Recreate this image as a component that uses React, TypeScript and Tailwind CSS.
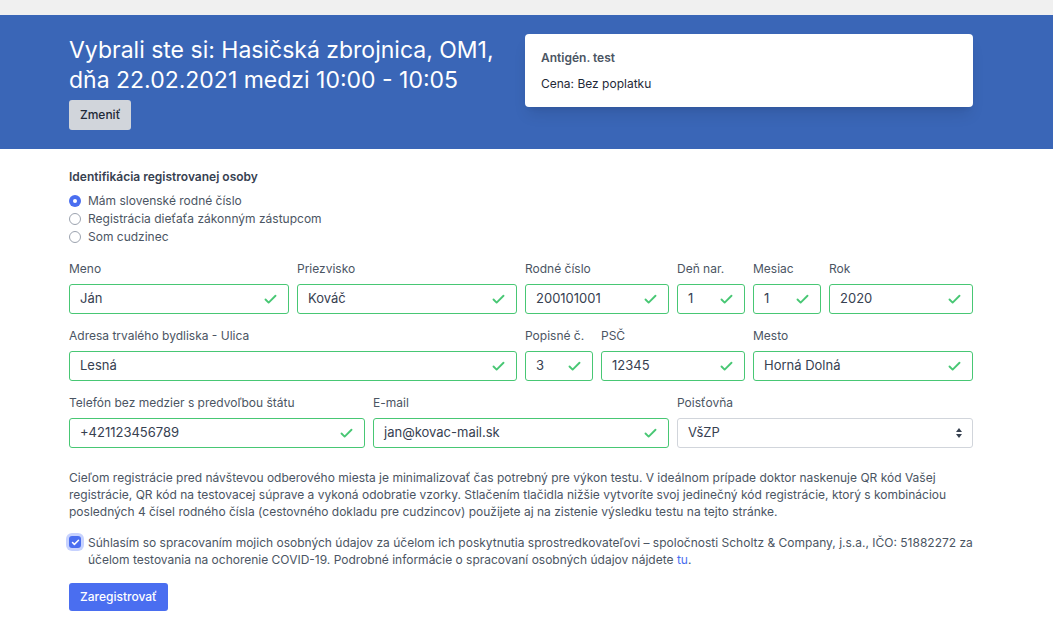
import { Check } from 'lucide-react';

const font = { fontFamily: 'Inter, "Noto Sans", sans-serif' };

type Field = { label: string; value: string; span: string };

const FIELDS: Field[] = [
  { label: 'Meno', value: 'Ján', span: 'col-span-3' },
  { label: 'Priezvisko', value: 'Kováč', span: 'col-span-3' },
  { label: 'Rodné číslo', value: '200101001', span: 'col-span-2' },
  { label: 'Deň nar.', value: '1', span: 'col-span-1' },
  { label: 'Mesiac', value: '1', span: 'col-span-1' },
  { label: 'Rok', value: '2020', span: 'col-span-2' },
  { label: 'Adresa trvalého bydliska - Ulica', value: 'Lesná', span: 'col-span-6' },
  { label: 'Popisné č.', value: '3', span: 'col-span-1' },
  { label: 'PSČ', value: '12345', span: 'col-span-2' },
  { label: 'Mesto', value: 'Horná Dolná', span: 'col-span-3' },
  { label: 'Telefón bez medzier s predvoľbou štátu', value: '+421123456789', span: 'col-span-4' },
  { label: 'E-mail', value: 'jan@kovac-mail.sk', span: 'col-span-4' },
];

function Input({ f }: { f: Field }) {
  return (
    <div className={f.span}>
      <label className="block text-[12px] leading-4 text-[#4b5563] mb-[7px] whitespace-nowrap">{f.label}</label>
      <div className="h-[30px] border border-[#48c774] rounded-[3px] flex items-center justify-between px-[10px] bg-white">
        <span className="text-[13px] text-[#374151]">{f.value}</span>
        <Check size={15} strokeWidth={3} className="text-[#48c774] shrink-0" />
      </div>
    </div>
  );
}

function Radio({ checked, label }: { checked?: boolean; label: string }) {
  return (
    <div className="flex items-center gap-[7px] h-[18px]">
      {checked ? (
        <span className="w-[12px] h-[12px] rounded-full bg-[#4a6ef0] flex items-center justify-center">
          <span className="w-[4px] h-[4px] rounded-full bg-white" />
        </span>
      ) : (
        <span className="w-[12px] h-[12px] rounded-full border border-[#9ca3af] bg-white" />
      )}
      <span className="text-[12px] text-[#4b5563]">{label}</span>
    </div>
  );
}

export default function App() {
  return (
    <div className="min-h-screen bg-white" style={font}>
      <div className="h-[15px] bg-[#f0f0f0]" />
      <header className="bg-[#3a66b7] h-[134px] pl-[69px] pr-[80px] flex">
        <div className="pt-[20px]">
          <h1 className="text-white text-[23px] leading-[30px] whitespace-nowrap">
            Vybrali ste si: Hasičská zbrojnica, OM1,
            <br />
            dňa 22.02.2021 medzi 10:00 - 10:05
          </h1>
          <button className="mt-[5px] h-[30px] px-[11px] bg-[#d1d5db] rounded-[3px] text-[12px] font-medium text-[#1f2937]">
            Zmeniť
          </button>
        </div>
        <div className="mt-[19px] w-[448px] h-[73px] bg-white rounded-[4px] shadow-lg px-[16px] pt-[15px] ml-auto">
          <div className="text-[12px] font-semibold text-[#4b5563]">Antigén. test</div>
          <div className="text-[12px] text-[#1f2937] mt-[8px]">Cena: Bez poplatku</div>
        </div>
      </header>

      <main className="pl-[69px] w-[973px] pt-[19px]">
        <div className="text-[12px] font-semibold text-[#374151] mb-[6px]">Identifikácia registrovanej osoby</div>
        <div className="flex flex-col">
          <Radio checked label="Mám slovenské rodné číslo" />
          <Radio label="Registrácia dieťaťa zákonným zástupcom" />
          <Radio label="Som cudzinec" />
        </div>

        <div className="grid grid-cols-12 gap-x-[8px] gap-y-[14px] mt-[15px]">
          {FIELDS.map((f, i) => (
            <Input key={i} f={f} />
          ))}
          <div className="col-span-4">
            <label className="block text-[12px] leading-4 text-[#4b5563] mb-[7px]">Poisťovňa</label>
            <div className="h-[30px] border border-[#d1d5db] rounded-[3px] flex items-center justify-between px-[10px] bg-white">
              <span className="text-[13px] text-[#374151]">VšZP</span>
              <svg width="6" height="10" viewBox="0 0 6 10" className="text-[#374151]">
                <path d="M3 0L6 4H0z M3 10L0 6h6z" fill="currentColor" />
              </svg>
            </div>
          </div>
        </div>

        <p className="mt-[21px] text-[12px] leading-[17px] text-[#4b5563]">
          Cieľom registrácie pred návštevou odberového miesta je minimalizovať čas potrebný pre výkon testu. V ideálnom prípade doktor naskenuje QR kód Vašej registrácie, QR kód na testovacej súprave a vykoná odobratie vzorky. Stlačením tlačidla nižšie vytvoríte svoj jedinečný kód registrácie, ktorý s kombináciou posledných 4 čísel rodného čísla (cestovného dokladu pre cudzincov) použijete aj na zistenie výsledku testu na tejto stránke.
        </p>

        <div className="mt-[14px] flex items-start gap-[7px]">
          <span className="mt-[2px] w-[12px] h-[12px] shrink-0 rounded-[3px] bg-[#4a6ef0] flex items-center justify-center ring-[3px] ring-[#c7d2fe]">
            <Check size={9} strokeWidth={4} className="text-white" />
          </span>
          <p className="text-[12px] leading-[17px] text-[#4b5563]">
            Súhlasím so spracovaním mojich osobných údajov za účelom ich poskytnutia sprostredkovateľovi – spoločnosti Scholtz &amp; Company, j.s.a., IČO: 51882272 za účelom testovania na ochorenie COVID-19. Podrobné informácie o spracovaní osobných údajov nájdete <a className="text-[#4a6ef0]">tu</a>.
          </p>
        </div>

        <button className="mt-[15px] h-[28px] px-[11px] bg-[#4a6ef0] text-white text-[12px] font-medium rounded-[3px]">
          Zaregistrovať
        </button>
      </main>
    </div>
  );
}
